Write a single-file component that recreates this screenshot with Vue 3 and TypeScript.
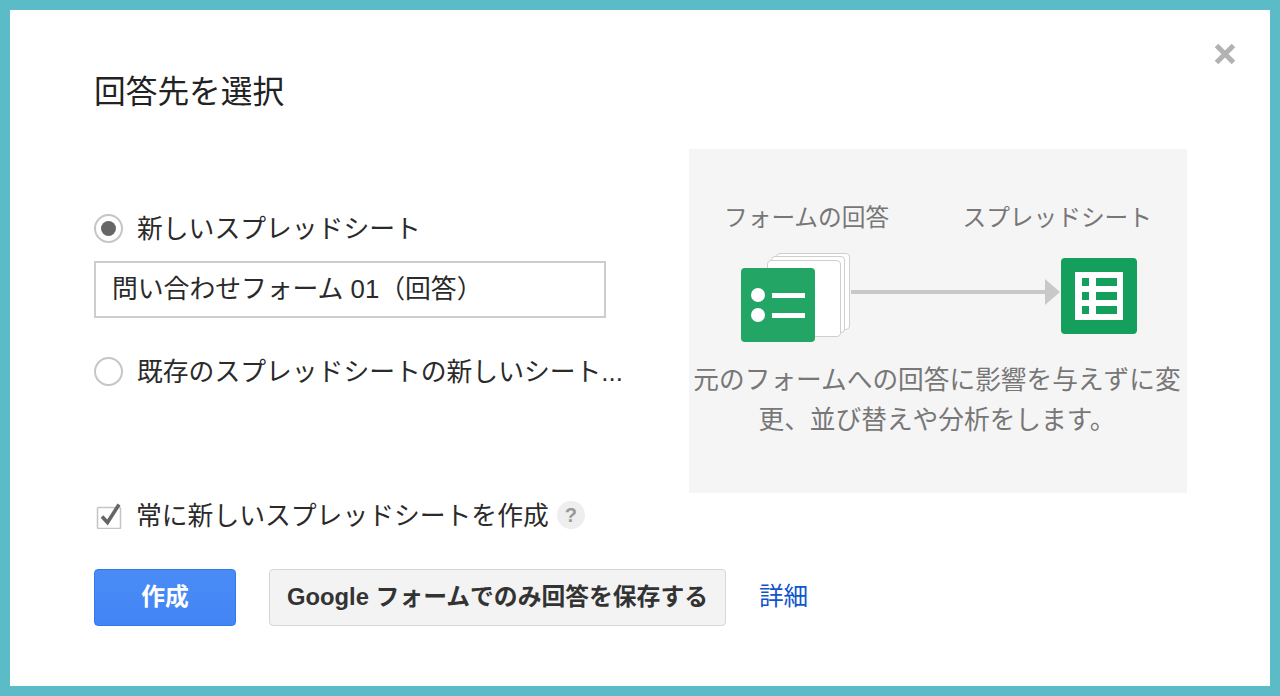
<script setup lang="ts">
const rows = [278, 292, 306]
</script>

<template>
  <div class="frame">
    <div class="dialog">
      <svg class="close" viewBox="0 0 24 24" width="24" height="24"><path d="M3.5 3.5 L20.5 20.5 M20.5 3.5 L3.5 20.5" stroke="#b2b2b2" stroke-width="5" fill="none"/></svg>
      <h1 class="title">回答先を選択</h1>
      <div class="middle">
        <div class="left">
          <label class="radio-row">
            <span class="radio"><span class="dot"></span></span>
            <span class="lift">新しいスプレッドシート</span>
          </label>
          <div class="input">問い合わせフォーム 01（回答）</div>
          <label class="radio-row second">
            <span class="radio"></span>
            <span class="lift">既存のスプレッドシートの新しいシート...</span>
          </label>
        </div>
        <div class="panel">
          <div class="labels"><span>フォームの回答</span><span>スプレッドシート</span></div>
          <div class="diagram">
            <div class="stack">
              <span class="sheet s3"></span><span class="sheet s2"></span><span class="sheet s1"></span>
              <svg class="form-icon" viewBox="0 0 74 74" width="74" height="74">
                <rect width="74" height="74" rx="4" fill="#22a565"/>
                <circle cx="17" cy="27" r="7" fill="#fff"/><circle cx="17" cy="47" r="7" fill="#fff"/>
                <rect x="31" y="25" width="33" height="5" fill="#fff"/><rect x="31" y="45" width="33" height="5" fill="#fff"/>
              </svg>
            </div>
            <div class="arrow"><span class="shaft"></span><span class="head"></span></div>
            <svg class="sheet-icon" viewBox="1061 258 76 76" width="76" height="76">
              <rect x="1061" y="258" width="76" height="76" rx="4" fill="#14a05c"/>
              <rect x="1075" y="272" width="48" height="48" fill="#fff"/>
              <g v-for="y in rows" :key="y">
                <rect x="1082" :y="y" width="7" height="8" fill="#14a05c"/>
                <rect x="1096" :y="y" width="21" height="8" fill="#14a05c"/>
              </g>
            </svg>
          </div>
          <p class="desc">元のフォームへの回答に影響を与えずに変更、並び替えや分析をします。</p>
        </div>
      </div>
      <div class="check-row">
        <svg class="checkbox" viewBox="0 0 28 28" width="28" height="28"><rect x="2.5" y="6.5" width="23" height="21" rx="1" fill="#fff" stroke="#c4c4c4" stroke-width="1.5"/><path d="M7 15.5 L12.5 21.5 L24 3.5" stroke="#666" stroke-width="3.6" fill="none"/></svg>
        <span class="lift">常に新しいスプレッドシートを作成</span>
        <span class="help">?</span>
      </div>
      <div class="actions">
        <button class="btn primary">作成</button>
        <button class="btn secondary">Google フォームでのみ回答を保存する</button>
        <a class="link">詳細</a>
      </div>
    </div>
  </div>
</template>

<style>
html, body { margin: 0; padding: 0; }
</style>

<style scoped>
.frame {
  width: 1280px; height: 696px; box-sizing: border-box;
  border: 10px solid #5bbcc8;
  background: #fff;
  font-family: "Liberation Sans", "Noto Sans CJK JP", sans-serif;
  color: #2a2a2a;
}
.dialog { position: relative; height: 100%; box-sizing: border-box; padding: 60px 0 0 84px; }
.close { position: absolute; right: 33px; top: 32px; }
.title { margin: 0; font-size: 31.7px; line-height: 44px; font-weight: 400; color: #222; }
.middle { display: flex; margin-top: 35px; }
.left { width: 595px; padding-top: 59px; font-size: 25.8px; }
.radio-row { display: flex; align-items: center; gap: 14px; height: 40px; }
.lift { padding-bottom: 4px; }
.radio { width: 29px; height: 29px; box-sizing: border-box; border: 2px solid #c6c6c6; border-radius: 50%; display: flex; align-items: center; justify-content: center; background: #fff; }
.dot { width: 15px; height: 15px; border-radius: 50%; background: #666; }
.input { margin-top: 13px; width: 512px; height: 57px; box-sizing: border-box; border: 2px solid #cdcdcd; padding-left: 16px; line-height: 52px; }
.second { margin-top: 33px; }
.panel { width: 498px; height: 344px; background: #f5f5f5; color: #777; box-sizing: border-box; padding-top: 51px; }
.labels { display: flex; justify-content: space-between; padding: 0 35px; font-size: 23.7px; line-height: 36px; }
.diagram { height: 108px; box-sizing: border-box; display: flex; align-items: flex-start; padding: 16px 0 0 52px; }
.stack { position: relative; width: 110px; height: 90px; flex: none; }
.sheet { position: absolute; width: 72px; height: 75px; box-sizing: content-box; background: #fff; border: 1px solid #cfcfcf; border-radius: 4px; }
.s1 { left: 26px; top: 8px; } .s2 { left: 30px; top: 4px; } .s3 { left: 35px; top: 1px; }
.form-icon { position: absolute; left: 0; top: 16px; }
.arrow { display: flex; align-items: center; margin-top: 27px; flex: none; }
.shaft { width: 194px; height: 4px; background: #c8c8c8; }
.head { width: 0; height: 0; border-left: 15px solid #c8c8c8; border-top: 13px solid transparent; border-bottom: 13px solid transparent; }
.sheet-icon { margin: 6px 0 0 1px; flex: none; }
.desc { margin: 16px 0 0; padding: 0 4px 0 2px; text-align: center; font-size: 25.7px; line-height: 40px; }
.check-row { display: flex; align-items: center; font-size: 25.8px; height: 44px; }
.checkbox { margin: 0 13px 0 1px; flex: none; }
.help { margin-left: 8px; width: 28px; height: 28px; border-radius: 50%; background: #eee; color: #999; font-size: 20px; font-weight: 700; display: flex; align-items: center; justify-content: center; }
.actions { display: flex; align-items: center; margin-top: 32px; }
.btn { height: 57px; font-family: inherit; font-size: 23.8px; font-weight: 700; border-radius: 4px; padding: 0 0 7px; }
.primary { width: 142px; background: linear-gradient(#4a8cf6, #4285f4); border: 1px solid #3079ed; color: #fff; }
.secondary { width: 457px; margin-left: 33px; background: #f3f3f3; border: 1px solid #d6d6d6; color: #333; }
.link { margin: 0 0 8px 33px; font-size: 24.6px; color: #1155cc; }
</style>
